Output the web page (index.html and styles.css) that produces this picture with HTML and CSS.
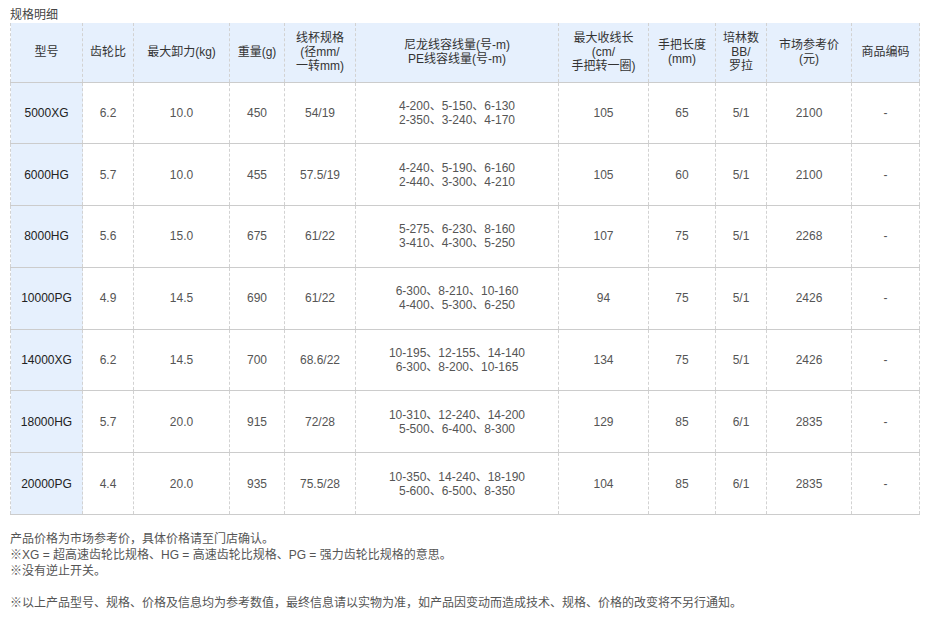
FILE: index.html
```html
<!DOCTYPE html>
<html lang="zh-CN">
<head>
<meta charset="utf-8">
<title>规格明细</title>
<link rel="stylesheet" href="styles.css">
</head>
<body>
<div class="page">
  <div class="title">规格明细</div>
  <table class="spec">
    <colgroup>
      <col class="c-model"><col class="c-gear"><col class="c-drag"><col class="c-weight"><col class="c-spool"><col class="c-line"><col class="c-retr"><col class="c-handle"><col class="c-bb"><col class="c-price"><col class="c-code">
    </colgroup>
    <thead>
      <tr>
        <th>型号</th>
        <th>齿轮比</th>
        <th>最大卸力(kg)</th>
        <th>重量(g)</th>
        <th>线杯规格<br>(径mm/<br>一转mm)</th>
        <th>尼龙线容线量(号-m)<br>PE线容线量(号-m)</th>
        <th>最大收线长<br>(cm/<br>手把转一圈)</th>
        <th>手把长度<br>(mm)</th>
        <th>培林数<br>BB/<br>罗拉</th>
        <th>市场参考价<br>(元)</th>
        <th>商品编码</th>
      </tr>
    </thead>
    <tbody>
      <tr><td class="model">5000XG</td><td>6.2</td><td>10.0</td><td>450</td><td>54/19</td><td>4-200、5-150、6-130<br>2-350、3-240、4-170</td><td>105</td><td>65</td><td>5/1</td><td>2100</td><td>-</td></tr>
      <tr><td class="model">6000HG</td><td>5.7</td><td>10.0</td><td>455</td><td>57.5/19</td><td>4-240、5-190、6-160<br>2-440、3-300、4-210</td><td>105</td><td>60</td><td>5/1</td><td>2100</td><td>-</td></tr>
      <tr><td class="model">8000HG</td><td>5.6</td><td>15.0</td><td>675</td><td>61/22</td><td>5-275、6-230、8-160<br>3-410、4-300、5-250</td><td>107</td><td>75</td><td>5/1</td><td>2268</td><td>-</td></tr>
      <tr><td class="model">10000PG</td><td>4.9</td><td>14.5</td><td>690</td><td>61/22</td><td>6-300、8-210、10-160<br>4-400、5-300、6-250</td><td>94</td><td>75</td><td>5/1</td><td>2426</td><td>-</td></tr>
      <tr><td class="model">14000XG</td><td>6.2</td><td>14.5</td><td>700</td><td>68.6/22</td><td>10-195、12-155、14-140<br>6-300、8-200、10-165</td><td>134</td><td>75</td><td>5/1</td><td>2426</td><td>-</td></tr>
      <tr><td class="model">18000HG</td><td>5.7</td><td>20.0</td><td>915</td><td>72/28</td><td>10-310、12-240、14-200<br>5-500、6-400、8-300</td><td>129</td><td>85</td><td>6/1</td><td>2835</td><td>-</td></tr>
      <tr><td class="model">20000PG</td><td>4.4</td><td>20.0</td><td>935</td><td>75.5/28</td><td>10-350、14-240、18-190<br>5-600、6-500、8-350</td><td>104</td><td>85</td><td>6/1</td><td>2835</td><td>-</td></tr>
    </tbody>
  </table>
  <div class="notes">
    <p>产品价格为市场参考价，具体价格请至门店确认。</p>
    <p>※XG = 超高速齿轮比规格、HG = 高速齿轮比规格、PG = 强力齿轮比规格的意思。</p>
    <p>※没有逆止开关。</p>
    <p class="gap">※以上产品型号、规格、价格及信息均为参考数值，最终信息请以实物为准，如产品因变动而造成技术、规格、价格的改变将不另行通知。</p>
  </div>
</div>
</body>
</html>
```
FILE: styles.css
```css
html, body {
  margin: 0;
  padding: 0;
  background: #ffffff;
}
body {
  font-family: "Liberation Sans", Arial, "Noto Sans CJK SC", sans-serif;
  font-size: 12px;
  color: #555555;
}
.page {
  padding: 7px 10px 0 10px;
}
.title {
  line-height: 16px;
  height: 16px;
  color: #444444;
}
.spec {
  border-collapse: collapse;
  table-layout: fixed;
  width: 909px;
}
.c-model { width: 72px; }
.c-gear { width: 51px; }
.c-drag { width: 96px; }
.c-weight { width: 55px; }
.c-spool { width: 71px; }
.c-line { width: 203px; }
.c-retr { width: 90px; }
.c-handle { width: 67px; }
.c-bb { width: 51px; }
.c-price { width: 85px; }
.c-code { width: 68px; }
.spec th,
.spec td {
  border-left: 1px dashed #d2d2d2;
  border-right: 1px dashed #d2d2d2;
  border-bottom: 1px solid #cccccc;
  text-align: center;
  vertical-align: middle;
  padding: 0 2px;
  line-height: 14px;
  font-weight: normal;
}
.spec thead tr {
  height: 59px;
}
.spec th {
  background: #e6f0fd;
  color: #333333;
}
.spec tbody tr {
  height: 61.8px;
}
.spec td {
  color: #555555;
}
.spec td.model {
  background: #e6f0fd;
  color: #222222;
}
.notes {
  margin-top: 16px;
}
.notes p {
  margin: 0;
  line-height: 16px;
  color: #555555;
}
.notes p.gap {
  margin-top: 16px;
}
```
